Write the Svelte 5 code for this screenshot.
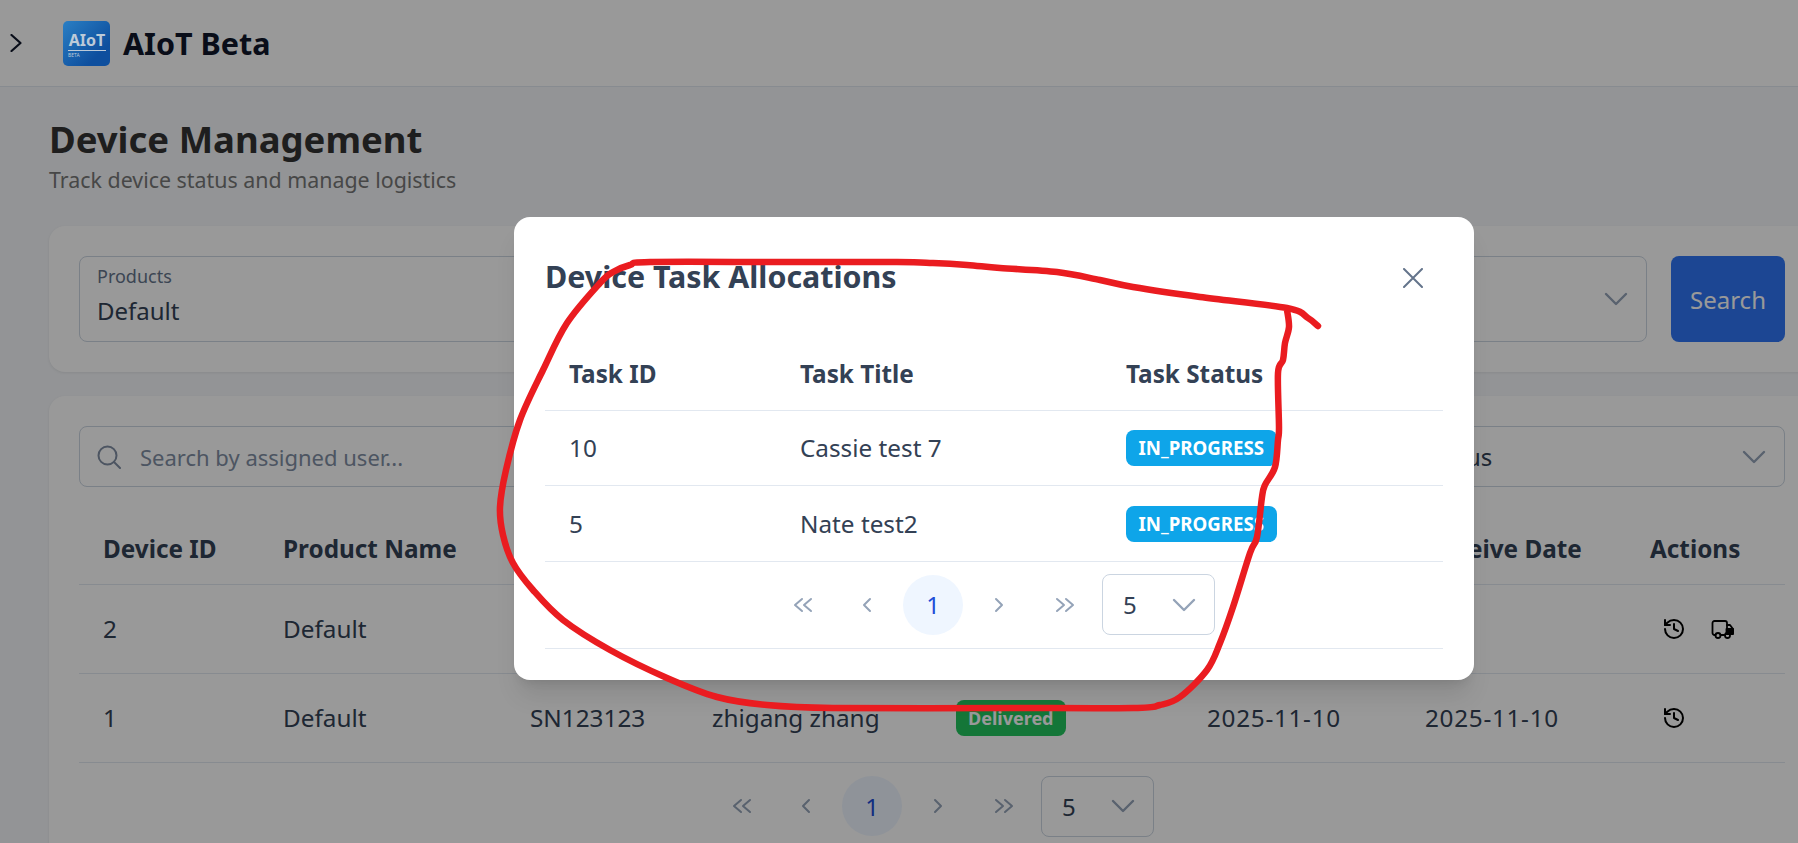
<script lang="ts">
  const devices = [
    { id: 2, product: "Default", serial: "SN456456", user: "zhigang zhang", status: "Shipped", ship: "2025-11-10", receive: "", truck: true },
    { id: 1, product: "Default", serial: "SN123123", user: "zhigang zhang", status: "Delivered", ship: "2025-11-10", receive: "2025-11-10", truck: false },
  ];
  const tasks = [
    { id: 10, title: "Cassie test 7", status: "IN_PROGRESS" },
    { id: 5, title: "Nate test2", status: "IN_PROGRESS" },
  ];

  // the hand drawn circle, traced from the screenshot
  const scribble = [
    [1318, 326], [1308, 318], [1287, 308], [1200, 297], [1133, 287], [1100, 280], [1057, 272], [1000, 268], [967, 265], [933, 263], [897, 262],
    [780, 262], [650, 262], [630, 265], [613, 272], [600, 283], [567, 323], [543, 370], [520, 420], [506, 470], [500, 507], [503, 535],
    [513, 563], [533, 590], [563, 620], [610, 650], [667, 678], [717, 697], [767, 705], [833, 708],
    [1000, 708], [1133, 708], [1160, 705], [1180, 697], [1207, 670], [1220, 643], [1233, 607], [1250, 553], [1257, 537],
    [1262, 497], [1265, 485], [1275, 467], [1278, 440], [1279, 427], [1278, 373], [1283, 360], [1285, 343], [1289, 327], [1287, 310],
  ];

  function smooth(pts: number[][]): string {
    let d = `M${pts[0][0]} ${pts[0][1]}`;
    for (let i = 0; i < pts.length - 1; i++) {
      const p0 = pts[Math.max(0, i - 1)];
      const p1 = pts[i];
      const p2 = pts[i + 1];
      const p3 = pts[Math.min(pts.length - 1, i + 2)];
      const c1 = [p1[0] + (p2[0] - p0[0]) / 6, p1[1] + (p2[1] - p0[1]) / 6];
      const c2 = [p2[0] - (p3[0] - p1[0]) / 6, p2[1] - (p3[1] - p1[1]) / 6];
      d += `C${c1[0]} ${c1[1]} ${c2[0]} ${c2[1]} ${p2[0]} ${p2[1]}`;
    }
    return d;
  }
</script>

{#snippet chevron()}
  <svg class="chev" viewBox="0 0 24 24" fill="none" stroke="currentColor" stroke-width="2.4" stroke-linecap="round" stroke-linejoin="round"><path d="M2 7l10 10 10-10" /></svg>
{/snippet}

{#snippet pager(cls: string)}
  <div class="pager {cls}">
    <svg class="arrow dbl" viewBox="0 0 20 16"><path d="M9 2L2 8l7 6M18 2l-7 6 7 6" /></svg>
    <svg class="arrow one" viewBox="0 0 10 16"><path d="M8 2L2 8l6 6" /></svg>
    <span class="current">1</span>
    <svg class="arrow one" viewBox="0 0 10 16"><path d="M2 2l6 6-6 6" /></svg>
    <svg class="arrow dbl" viewBox="0 0 20 16"><path d="M2 2l7 6-7 6M11 2l7 6-7 6" /></svg>
    <div class="size"><span>5</span>{@render chevron()}</div>
  </div>
{/snippet}

<div class="page">
  <header>
    <svg class="expand" viewBox="0 0 12 18" fill="none" stroke="currentColor" stroke-width="2.2" stroke-linecap="round" stroke-linejoin="round"><path d="M1.5 1l9 8-9 8" /></svg>
    <div class="logo">
      <span class="logo-name">AIoT</span>
      <span class="logo-beta">BETA</span>
    </div>
    <span class="brand">AIoT Beta</span>
  </header>

  <main>
    <h1>Device Management</h1>
    <p class="sub">Track device status and manage logistics</p>

    <section class="card filters">
      <div class="select float">
        <div class="field"><label>Products</label><span>Default</span></div>
        {@render chevron()}
      </div>
      <div class="select float">
        <div class="field"><label>Status</label><span>All</span></div>
        {@render chevron()}
      </div>
      <button>Search</button>
    </section>

    <section class="card">
      <div class="tools">
        <div class="search">
          <svg viewBox="0 0 24 24" fill="none" stroke="currentColor" stroke-width="2" stroke-linecap="round"><circle cx="10.5" cy="10.5" r="9" /><path d="M17 17l6 6" /></svg>
          <span>Search by assigned user...</span>
        </div>
        <div class="select"><span>All Status</span>{@render chevron()}</div>
      </div>
      <table class="devices">
        <colgroup>
          <col style="width:180px" /><col style="width:247px" /><col style="width:182px" /><col style="width:244px" />
          <col style="width:251px" /><col style="width:218px" /><col style="width:225px" /><col />
        </colgroup>
        <thead>
          <tr>
            <th>Device ID</th><th>Product Name</th><th>Serial No</th><th>Assigned User</th>
            <th>Status</th><th>Ship Date</th><th>Receive Date</th><th>Actions</th>
          </tr>
        </thead>
        <tbody>
          {#each devices as d (d.id)}
            <tr>
              <td>{d.id}</td>
              <td>{d.product}</td>
              <td>{d.serial}</td>
              <td>{d.user}</td>
              <td><span class="badge green">{d.status}</span></td>
              <td class="date">{d.ship}</td>
              <td class="date">{d.receive}</td>
              <td>
                <div class="actions">
                  <svg viewBox="0 0 24 24" fill="none" stroke="currentColor" stroke-width="2" stroke-linecap="round" stroke-linejoin="round"><path d="M3 12a9 9 0 1 0 9-9 9.75 9.75 0 0 0-6.74 2.74L3 8" /><path d="M3 3v5h5" /><path d="M12 7v5l4 2" /></svg>
                  {#if d.truck}
                    <svg viewBox="0 0 24 24" fill="none" stroke="currentColor" stroke-width="1.8" stroke-linecap="round" stroke-linejoin="round"><path d="M4.5 18H3.5a2 2 0 0 1-2-2V6a2 2 0 0 1 2-2H14a2 2 0 0 1 2 2v9" /><path d="M9.5 18h4" /><path d="M16 8h3l3 4v4a1 1 0 0 1-1 1" /><path d="M15.5 12H22v5h-6.500z" fill="currentColor" /><circle cx="7" cy="18.500" r="2.500" /><circle cx="16.500" cy="18.500" r="2.500" /></svg>
                  {/if}
                </div>
              </td>
            </tr>
          {/each}
        </tbody>
      </table>
      {@render pager("outer")}
    </section>
  </main>

  <div class="overlay">
    <div class="modal">
      <div class="modal-head">
        <h2>Device Task Allocations</h2>
        <svg viewBox="0 0 20 20" fill="none" stroke="currentColor" stroke-width="2" stroke-linecap="round"><path d="M1 1l18 18M19 1L1 19" /></svg>
      </div>
      <table class="tasks">
        <colgroup><col style="width:231px" /><col style="width:326px" /><col /></colgroup>
        <thead>
          <tr><th>Task ID</th><th>Task Title</th><th>Task Status</th></tr>
        </thead>
        <tbody>
          {#each tasks as t (t.id)}
            <tr>
              <td>{t.id}</td>
              <td>{t.title}</td>
              <td><span class="badge blue">{t.status}</span></td>
            </tr>
          {/each}
        </tbody>
      </table>
      {@render pager("inner")}
    </div>
  </div>

  <svg class="scribble" viewBox="0 0 1798 843"><path d={smooth(scribble)} /></svg>
</div>

<style>
  :global(body) {
    margin: 0;
  }
  .page {
    position: relative;
    height: 843px;
    overflow: hidden;
    background: #f5f7fa;
    font-family: "Noto Sans", "Open Sans", sans-serif;
    color: #334155;
  }
  header {
    display: flex;
    align-items: center;
    height: 86px;
    background: #fff;
    border-bottom: 1px solid #e2e8f0;
    color: #0f172a;
  }
  .expand {
    width: 12px;
    height: 18px;
    margin-left: 10px;
  }
  /* the logo keeps its own bright colours, it is not dimmed as much as the rest */
  .logo {
    position: relative;
    z-index: 1;
    display: flex;
    flex-direction: column;
    width: 47px;
    height: 45px;
    margin-left: 41px;
    box-sizing: border-box;
    padding: 11px 4px 0 5px;
    border-radius: 5px;
    background: linear-gradient(135deg, #2a7fc4, #0e4f9e 75%);
    color: #bccad8;
    line-height: 1;
  }
  .logo-name {
    font-size: 16px;
    font-weight: 700;
    text-align: center;
    border-bottom: 1px solid #bccad8;
    padding-bottom: 2px;
  }
  .logo-beta {
    font-size: 5px;
    margin-top: 2px;
  }
  .brand {
    margin-left: 13px;
    font-size: 30.500px;
    font-weight: 700;
  }
  main {
    width: 1766px;
    padding-left: 49px;
  }
  h1 {
    margin: 27px 0 0;
    font-size: 36.500px;
    line-height: 51px;
    font-weight: 700;
    color: #333;
  }
  .sub {
    margin: 0;
    font-size: 21.400px;
    line-height: 30px;
    color: #777;
  }
  .card {
    box-sizing: border-box;
    padding: 30px;
    background: #fff;
    border-radius: 16px;
    box-shadow: 0 1px 3px rgba(0, 0, 0, 0.08);
  }
  .filters {
    display: flex;
    gap: 24px;
    margin-top: 31px;
    height: 146px;
    margin-bottom: 24px;
  }
  .select {
    display: flex;
    align-items: center;
    justify-content: space-between;
    box-sizing: border-box;
    padding: 0 20px 0 17px;
    border: 1px solid #cbd5e1;
    border-radius: 8px;
    font-size: 24px;
    color: #334155;
  }
  .select.float {
    flex: 1;
    height: 86px;
  }
  .field {
    padding-bottom: 7px;
  }
  .field label {
    display: block;
    font-size: 18px;
    line-height: 22px;
    color: #64748b;
    margin-bottom: 9px;
  }
  .select span {
    display: block;
    line-height: 30px;
  }
  .chev {
    width: 24px;
    height: 24px;
    margin-right: -2px;
    color: #94a3b8;
  }
  button {
    width: 114px;
    height: 86px;
    border: 0;
    border-radius: 8px;
    background: #2f76f5;
    color: #fff;
    font: inherit;
    font-size: 24px;
  }
  .tools {
    display: grid;
    grid-template-columns: 1fr 415px;
    gap: 24px;
    height: 61px;
  }
  .search {
    display: flex;
    align-items: center;
    gap: 19px;
    padding-left: 17px;
    border: 1px solid #cbd5e1;
    border-radius: 8px;
    font-size: 22px;
    color: #808ea3;
  }
  .search svg {
    width: 24px;
    height: 24px;
  }
  table {
    border-collapse: collapse;
    table-layout: fixed;
    width: 100%;
    font-size: 24.300px;
  }
  th {
    text-align: left;
    font-weight: 700;
    padding: 0 0 0 24px;
    border-bottom: 1px solid #e2e8f0;
  }
  td {
    padding: 0 0 0 24px;
    border-bottom: 1px solid #e2e8f0;
  }
  .date {
    letter-spacing: 0.7px;
  }
  .devices thead tr {
    height: 97px;
  }
  .devices th {
    vertical-align: bottom;
    padding-bottom: 19px;
  }
  .devices tbody tr {
    height: 89px;
  }
  .actions {
    display: flex;
    gap: 25px;
    padding-left: 12px;
    color: #000;
  }
  .actions svg {
    width: 24px;
    height: 24px;
  }
  .badge {
    display: inline-block;
    padding: 0 12px;
    line-height: 36px;
    border-radius: 8px;
    font-size: 18px;
    font-weight: 700;
    color: #fff;
    vertical-align: middle;
  }
  .green {
    background: #22c55e;
  }
  .blue {
    background: #0ea5e9;
    font-size: 18.700px;
    padding: 0 12.500px;
  }
  .pager {
    display: flex;
    align-items: center;
    height: 87px;
  }
  .outer {
    padding-left: 653px;
  }
  .inner {
    box-sizing: border-box;
    border-bottom: 1px solid #e2e8f0;
    padding-left: 248px;
  }
  .arrow {
    fill: none;
    stroke: #94a3b8;
    stroke-width: 2;
    stroke-linecap: round;
    stroke-linejoin: round;
  }
  .dbl {
    width: 20px;
    height: 16px;
  }
  .dbl:first-child {
    margin-right: 49px;
  }
  .dbl:nth-last-child(2) {
    margin-left: 51px;
    margin-right: 27px;
  }
  .one {
    width: 10px;
    height: 16px;
  }
  .current {
    display: flex;
    align-items: center;
    justify-content: center;
    width: 60px;
    height: 60px;
    margin: 0 31px;
    border-radius: 50%;
    background: #eff6ff;
    color: #1d4ed8;
    font-size: 24px;
  }
  .size {
    display: flex;
    align-items: center;
    justify-content: space-between;
    box-sizing: border-box;
    width: 113px;
    height: 61px;
    padding: 0 20px;
    border: 1px solid #cbd5e1;
    border-radius: 8px;
    font-size: 24px;
  }
  .overlay {
    position: absolute;
    inset: 0;
    background: rgba(0, 0, 0, 0.4);
  }
  .modal {
    position: absolute;
    left: 514px;
    top: 217px;
    width: 960px;
    height: 463px;
    box-sizing: border-box;
    padding: 30px 31px;
    background: #fff;
    border-radius: 16px;
    box-shadow: 0 20px 25px -5px rgba(0, 0, 0, 0.1), 0 8px 10px -6px rgba(0, 0, 0, 0.1);
  }
  .modal-head {
    display: flex;
    align-items: flex-start;
    justify-content: space-between;
    height: 90px;
    padding-right: 20px;
  }
  .modal-head h2 {
    margin: 0;
    font-size: 30.400px;
    line-height: 60px;
    font-weight: 700;
  }
  .modal-head svg {
    width: 20px;
    height: 20px;
    margin-top: 21px;
    color: #64748b;
  }
  .tasks thead tr {
    height: 73px;
  }
  .tasks tbody tr {
    height: 75px;
  }
  .tasks tbody tr:last-child {
    height: 76px;
  }
  .scribble {
    position: absolute;
    inset: 0;
    width: 1798px;
    height: 843px;
    pointer-events: none;
  }
  .scribble path {
    fill: none;
    stroke: #ea1c20;
    stroke-width: 6.500;
    stroke-linecap: round;
    stroke-linejoin: round;
  }
</style>
